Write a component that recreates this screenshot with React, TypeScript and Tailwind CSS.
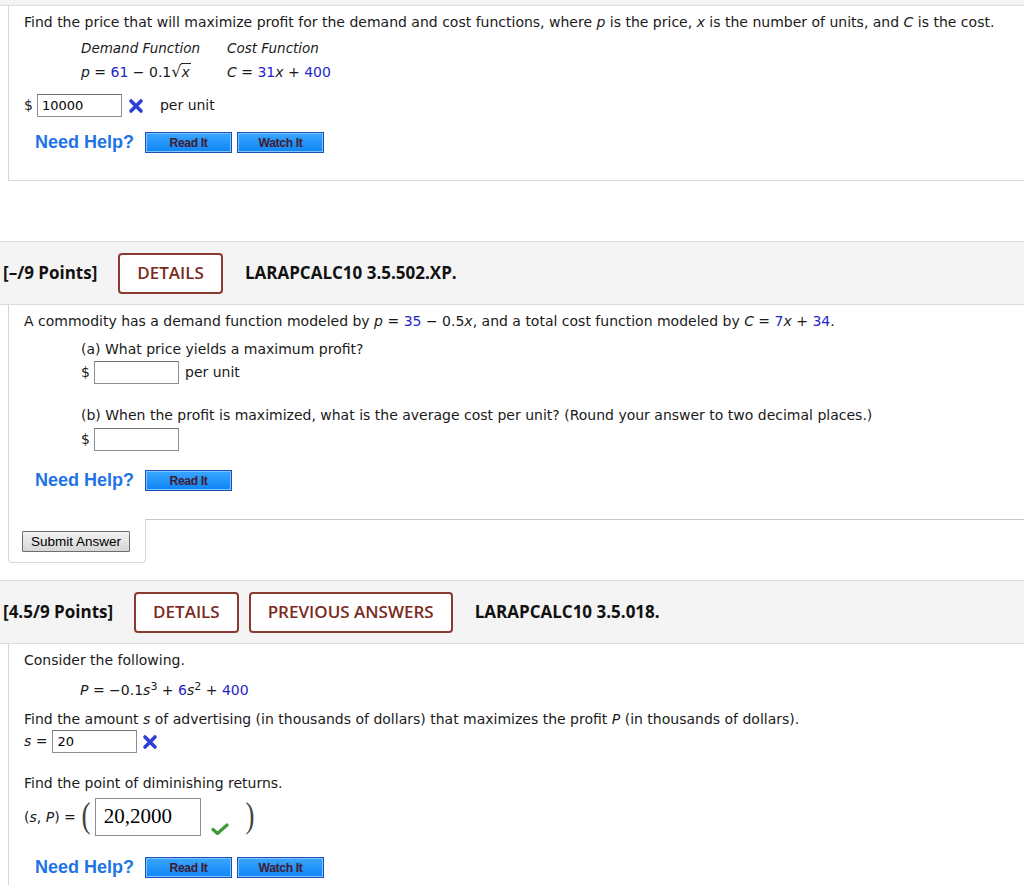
import React from 'react'

const body = { fontFamily: '"DejaVu Sans", Verdana, sans-serif' }

function Num({ children }: { children: React.ReactNode }) {
  return <span className="text-[#2424c8]">{children}</span>
}

function V({ children }: { children: React.ReactNode }) {
  return <i>{children}</i>
}

function HelpButton({ label }: { label: string }) {
  return (
    <button className="h-[21px] w-[87px] border border-[#1f4fb5] bg-[linear-gradient(#3aa6ff,#0f86f5)] shadow-[inset_0_0_0_1px_#7cc4ff] flex items-center justify-center text-[12px] font-black text-[#33203f] [font-family:'Liberation_Sans',Arial,sans-serif] [text-shadow:0_0_1px_#5a7fb8] tracking-[-0.3px]">
      {label}
    </button>
  )
}

function NeedHelp({ buttons }: { buttons: string[] }) {
  return (
    <div className="flex items-center gap-[11px]">
      <span className="text-[18px] font-bold text-[#1e74e6] [font-family:'Liberation_Sans',Arial,sans-serif]">
        Need Help?
      </span>
      <div className="flex gap-[5px]">
        {buttons.map((b) => (
          <HelpButton key={b} label={b} />
        ))}
      </div>
    </div>
  )
}

function WrongMark() {
  return (
    <svg width="16" height="16" viewBox="0 0 16 16">
      <path d="M3 3 L13 13 M13 3 L3 13" stroke="#2c3fd8" strokeWidth="3.6" strokeLinecap="round" />
    </svg>
  )
}

function CheckMark() {
  return (
    <svg width="18" height="12" viewBox="0 0 18 12">
      <path d="M2 6.5 L6.5 10.5 L16 2" stroke="#3f9a3c" strokeWidth="3.2" fill="none" strokeLinecap="round" strokeLinejoin="round" />
    </svg>
  )
}

function AnswerBox({ value, w = 'w-[85px]' }: { value?: string; w?: string }) {
  return (
    <span className={`inline-flex items-center h-[23px] ${w} border border-[#8f8f8f] border-t-[#6f6f6f] bg-white pl-[4px] text-[13px] text-black`}>
      {value}
    </span>
  )
}

function Header({ points, code, tabs }: { points: string; code: string; tabs: string[] }) {
  return (
    <div className="h-[64px] bg-[#f4f4f4] border-y border-[#dcdcdc] flex items-center [font-family:'Open_Sans',sans-serif]">
      <span className="pl-[3px] text-[17px] font-bold text-[#111]">{points}</span>
      <div className="flex gap-[10px] ml-[21px]">
        {tabs.map((t) => (
          <span
            key={t}
            className="h-[41px] px-[17px] flex items-center border-2 border-[#8b3a30] rounded-[4px] bg-white text-[17px] font-semibold text-[#7a2a22]"
          >
            {t}
          </span>
        ))}
      </div>
      <span className="ml-[22px] text-[17px] font-bold text-[#111]">{code}</span>
    </div>
  )
}

export default function App() {
  return (
    <div className="w-[1024px] h-[885px] overflow-hidden bg-white text-[14px] text-[#1a1a1a]" style={body}>
      <div className="h-[6px] bg-[#f4f4f4] border-b border-[#dcdcdc]" />

      {/* first question, already answered */}
      <div className="ml-[8px] h-[175px] border-l border-b border-[#d6d6d6] pl-[15px] pt-[6px]">
        <p className="leading-[20px]">
          Find the price that will maximize profit for the demand and cost functions, where <V>p</V> is the price,{' '}
          <V>x</V> is the number of units, and <V>C</V> is the cost.
        </p>
        <div className="flex ml-[57px] mt-[6px]">
          <div className="w-[146px]">
            <div className="italic leading-[20px] text-[13.5px]">Demand Function</div>
            <div className="leading-[20px] mt-[4px]">
              <V>p</V> = <Num>61</Num> − 0.1
              <span className="text-[16px]">√</span>
              <span className="border-t border-[#222] italic pr-[1px]">x</span>
            </div>
          </div>
          <div>
            <div className="italic leading-[20px] text-[13.5px]">Cost Function</div>
            <div className="leading-[20px] mt-[4px]">
              <V>C</V> = <Num>31</Num>
              <V>x</V> + <Num>400</Num>
            </div>
          </div>
        </div>
        <div className="flex items-center mt-[12px] h-[23px]">
          <span className="mr-[4px]">$</span>
          <AnswerBox value="10000" />
          <span className="ml-[6px]">
            <WrongMark />
          </span>
          <span className="ml-[16px]">per unit</span>
        </div>
        <div className="mt-[12px] ml-[11px]">
          <NeedHelp buttons={['Read It', 'Watch It']} />
        </div>
      </div>

      <div className="h-[60px]" />

      <Header points="[–/9 Points]" code="LARAPCALC10 3.5.502.XP." tabs={['DETAILS']} />

      {/* second question */}
      <div className="ml-[8px] border-l border-[#d6d6d6] pl-[15px] pt-[6px] h-[214px]">
        <p className="leading-[20px]">
          A commodity has a demand function modeled by <V>p</V> = <Num>35</Num> − 0.5<V>x</V>, and a total cost
          function modeled by <V>C</V> = <Num>7</Num>
          <V>x</V> + <Num>34</Num>.
        </p>
        <div className="ml-[57px] mt-[8px]">
          <p className="leading-[20px]">(a) What price yields a maximum profit?</p>
          <div className="flex items-center mt-[2px] h-[23px]">
            <span className="w-[13px]">$</span>
            <AnswerBox />
            <span className="ml-[6px]">per unit</span>
          </div>
          <p className="leading-[20px] mt-[21px]">
            (b) When the profit is maximized, what is the average cost per unit? (Round your answer to two decimal
            places.)
          </p>
          <div className="flex items-center mt-[3px] h-[23px]">
            <span className="w-[13px]">$</span>
            <AnswerBox />
          </div>
        </div>
        <div className="mt-[16px] ml-[11px]">
          <NeedHelp buttons={['Read It']} />
        </div>
      </div>

      <div className="flex h-[44px]">
        <div className="ml-[8px] w-[138px] border-l border-r border-b border-[#d6d6d6] rounded-b-[4px] pl-[13px] pt-[12px]">
          <button className="h-[21px] w-[108px] border border-[#6e6e6e] rounded-[1px] bg-[linear-gradient(#f2f2f2,#d6d6d6)] text-[13.5px] text-black leading-none [font-family:'Liberation_Sans',Arial,sans-serif]">
            Submit Answer
          </button>
        </div>
        <div className="flex-1 border-t border-[#c8c8c8]" />
      </div>

      <div className="h-[17px]" />

      <Header points="[4.5/9 Points]" code="LARAPCALC10 3.5.018." tabs={['DETAILS', 'PREVIOUS ANSWERS']} />

      {/* third question */}
      <div className="ml-[8px] border-l border-[#d6d6d6] pl-[15px] pt-[6px] h-[260px]">
        <p className="leading-[20px]">Consider the following.</p>
        <p className="leading-[20px] ml-[56px] mt-[10px]">
          <V>P</V> = −0.1<V>s</V>
          <sup className="text-[11px]">3</sup> + <Num>6</Num>
          <V>s</V>
          <sup className="text-[11px]">2</sup> + <Num>400</Num>
        </p>
        <p className="leading-[20px] mt-[9px]">
          Find the amount <V>s</V> of advertising (in thousands of dollars) that maximizes the profit <V>P</V> (in
          thousands of dollars).
        </p>
        <div className="flex items-center mt-[1px] h-[23px]">
          <span className="mr-[5px]">
            <V>s</V> =
          </span>
          <AnswerBox value="20" />
          <span className="ml-[5px]">
            <WrongMark />
          </span>
        </div>
        <p className="leading-[20px] mt-[20px]">Find the point of diminishing returns.</p>
        <div className="flex items-center mt-[4px] h-[40px]">
          <span>
            (<V>s</V>, <V>P</V>) =
          </span>
          <span className="ml-[4px] text-[36px] leading-none [font-family:'Liberation_Serif',serif] text-[#444] scale-x-75 -mt-[4px]">(</span>
          <span className="ml-[3px] inline-flex items-center h-[38px] w-[106px] border border-[#8f8f8f] pl-[8px] text-[21px] [font-family:'Liberation_Serif',serif] text-black">
            20,2000
          </span>
          <span className="ml-[10px] mt-[24px]">
            <CheckMark />
          </span>
          <span className="ml-[15px] text-[36px] leading-none [font-family:'Liberation_Serif',serif] text-[#444] scale-x-75 -mt-[4px]">)</span>
        </div>
        <div className="mt-[17px] ml-[11px]">
          <NeedHelp buttons={['Read It', 'Watch It']} />
        </div>
      </div>
    </div>
  )
}
